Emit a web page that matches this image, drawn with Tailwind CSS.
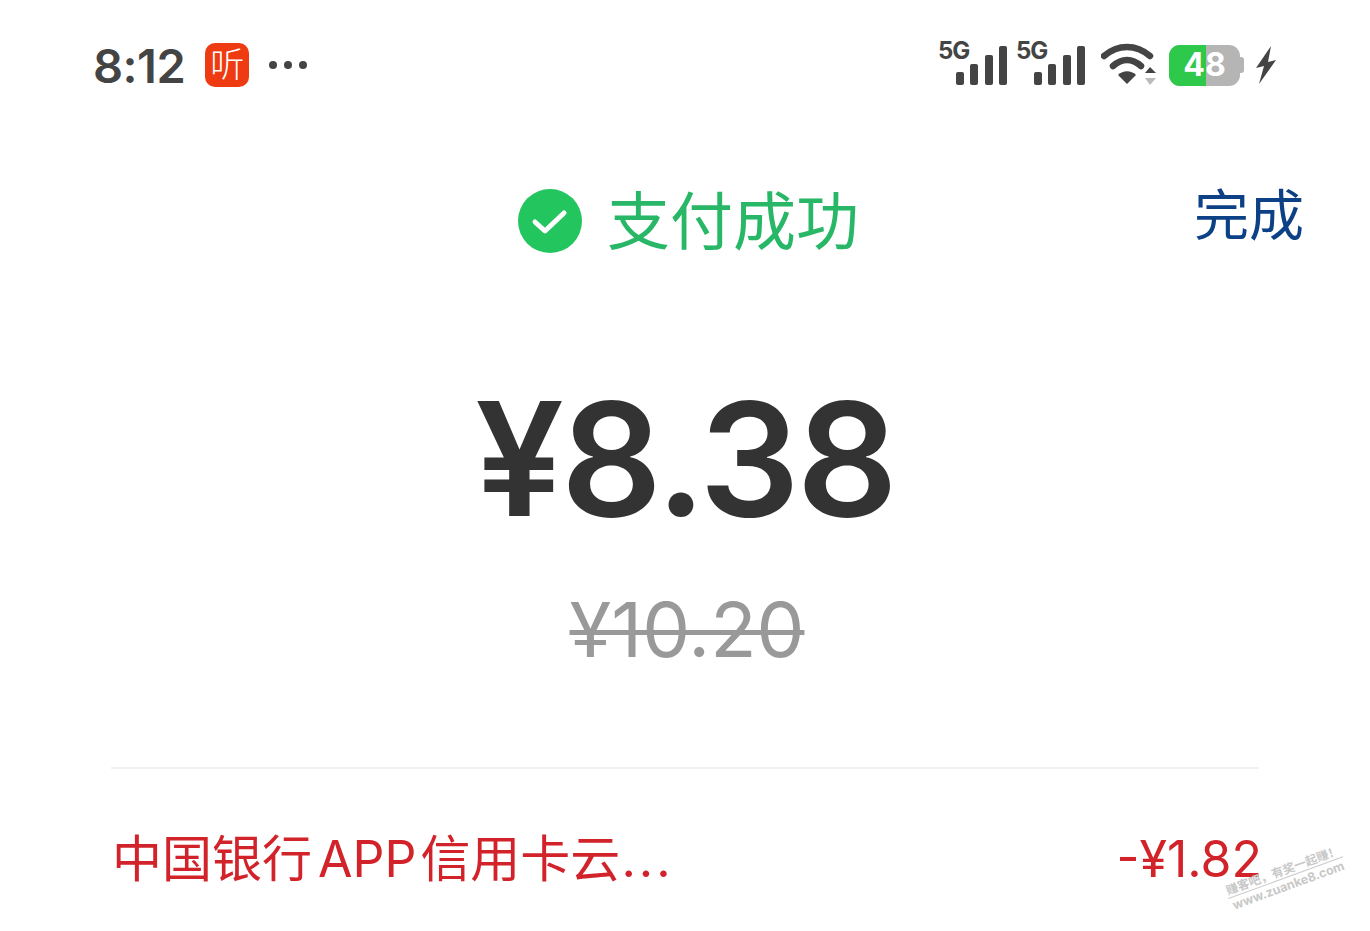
<!DOCTYPE html>
<html lang="zh-CN">
<head>
    <meta charset="UTF-8">
    <meta name="viewport" content="width=device-width, initial-scale=1.0">
    <title>支付成功</title>
    <script src="https://cdn.jsdelivr.net/npm/@tailwindcss/browser@4"></script>
</head>
<body class="bg-white">
<div class="relative w-[1370px] h-[931px] overflow-hidden bg-white font-['Inter','Noto_Sans_CJK_SC',sans-serif]">

  <!-- status bar -->
  <div class="flex items-center justify-between h-[130px] pl-[93px] pr-[94px]">
    <div class="flex items-center">
      <span class="text-[47px] leading-none font-semibold text-[#444] tracking-[-0.500px]">8:12</span>
      <div class="ml-[20px] w-[44px] h-[44px] rounded-[10px] bg-[#ee3b12] flex items-center justify-center text-[34px] leading-none text-white font-light">听</div>
      <div class="ml-[20px] flex gap-[7px]">
        <span class="w-[8px] h-[8px] rounded-full bg-[#444]"></span>
        <span class="w-[8px] h-[8px] rounded-full bg-[#444]"></span>
        <span class="w-[8px] h-[8px] rounded-full bg-[#444]"></span>
      </div>
    </div>
    <div class="flex items-center">
      <!-- signal x2 -->
      <div class="relative w-[70px] h-[50px]">
        <span class="absolute left-0 top-[-1px] text-[24px] leading-none font-bold text-[#444] tracking-[-1px]">5G</span>
        <svg class="absolute left-[17px] top-[5px] w-[52px] h-[42px]" viewBox="0 0 52 42" fill="#444">
          <rect x="1" y="27" width="8" height="13" rx="2"/><rect x="15" y="19" width="8" height="21" rx="2"/><rect x="30" y="10" width="8" height="30" rx="2"/><rect x="44" y="1" width="8" height="39" rx="2"/>
        </svg>
      </div>
      <div class="relative ml-[8px] w-[70px] h-[50px]">
        <span class="absolute left-0 top-[-1px] text-[24px] leading-none font-bold text-[#444] tracking-[-1px]">5G</span>
        <svg class="absolute left-[17px] top-[5px] w-[52px] h-[42px]" viewBox="0 0 52 42" fill="#444">
          <rect x="1" y="27" width="8" height="13" rx="2"/><rect x="15" y="19" width="8" height="21" rx="2"/><rect x="30" y="10" width="8" height="30" rx="2"/><rect x="44" y="1" width="8" height="39" rx="2"/>
        </svg>
      </div>
      <!-- wifi -->
      <svg class="ml-[15px] w-[56px] h-[44px]" viewBox="0 0 56 44" fill="none">
        <path d="M3 13C17 1 35 1 49 13" stroke="#444" stroke-width="6.500" stroke-linecap="round"/>
        <path d="M12 23C21 15 31 15 40 23" stroke="#444" stroke-width="6.500" stroke-linecap="round"/>
        <path d="M17 32C22 27 30 27 35 32L26 41Z" fill="#444"/>
        <path d="M44 30L49 24L55 30Z" fill="#444"/>
        <path d="M44 35L55 35L49 42Z" fill="#bbb"/>
      </svg>
      <!-- battery -->
      <div class="ml-[12px] relative w-[71px] h-[41px] rounded-[11px] bg-[#b5b5b5] overflow-hidden">
        <div class="absolute inset-y-0 left-0 w-[37px] bg-[#2ec84a]"></div>
        <span class="absolute inset-0 flex items-center justify-center text-[32px] leading-none font-bold text-white">48</span>
      </div>
      <div class="w-[4px] h-[16px] rounded-r-[3px] bg-[#b5b5b5]"></div>
      <svg class="ml-[12px] w-[20px] h-[38px]" viewBox="0 0 20 38" fill="#444">
        <path d="M15 0L0 22L8 20L3 38L20 14L12 16Z"/>
      </svg>
    </div>
  </div>

  <!-- header -->
  <div class="relative flex items-center justify-center h-[90px] mt-[46px]">
    <div class="flex items-center ml-[7px]">
      <svg class="w-[64px] h-[64px]" viewBox="0 0 64 64">
        <circle cx="32" cy="32" r="32" fill="#22c55e"/>
        <path d="M17 33L27 42L46 24" fill="none" stroke="#fff" stroke-width="5" stroke-linecap="round" stroke-linejoin="round"/>
      </svg>
      <span class="ml-[25px] text-[63px] leading-none text-[#27b766]">支付成功</span>
    </div>
    <span class="absolute right-[66px] top-[-6px] text-[55px] leading-[90px] text-[#0d4186]">完成</span>
  </div>

  <!-- amount -->
  <div class="mt-[114px] text-center text-[158px] leading-none font-semibold text-[#333] tracking-[-3px] h-[158px]">¥8.38</div>
  <div class="mt-[53px] text-center text-[76px] leading-none text-[#999] ml-[4px]"><span class="line-through decoration-[5px]">¥10.20</span></div>

  <!-- discount -->
  <div class="mx-[111px] mt-[100px] border-t-2 border-[#f2f2f2]"></div>
  <div class="flex items-center justify-between ml-[112px] mr-[108px] mt-[65px] text-[50px] leading-none text-[#d2232a]">
    <span class="whitespace-nowrap">中国银行<span class="ml-[6px] mr-[4px]">APP</span>信用卡云<span class="ml-[1px] tracking-[3px]">...</span></span>
    <span>-¥1.82</span>
  </div>

  <!-- watermark -->
  <div class="absolute left-[1223px] top-[884px] rotate-[-20deg] origin-top-left text-[#c8c8c8] text-center w-[122px]">
    <div class="text-[12px] leading-[15px] font-bold border-b border-[#ccc] whitespace-nowrap">赚客吧，有奖一起赚！</div>
    <div class="text-[12.500px] leading-[16px] font-bold whitespace-nowrap">www.zuanke8.com</div>
  </div>
</div>
</body>
</html>
